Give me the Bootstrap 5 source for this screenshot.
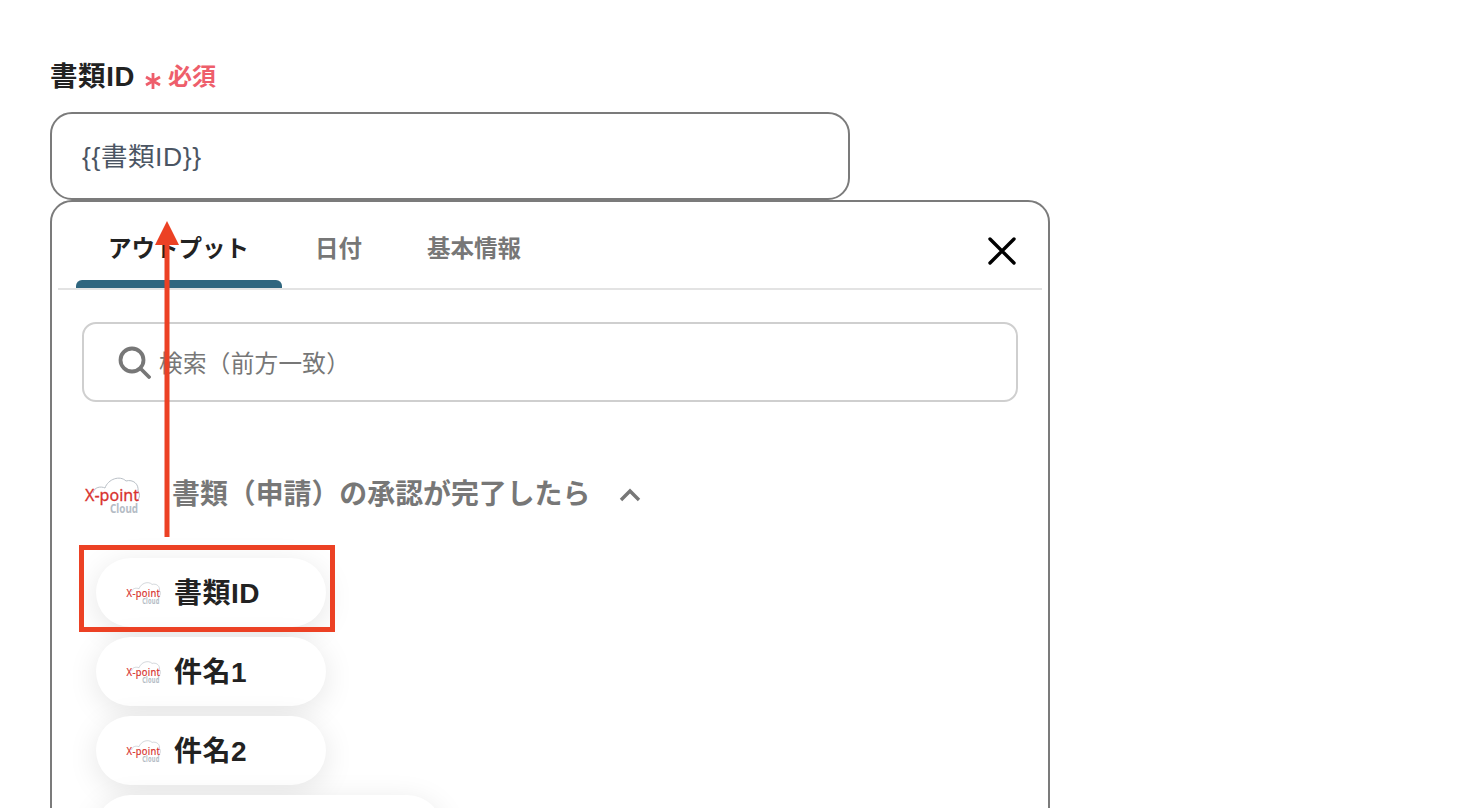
<!DOCTYPE html>
<html lang="ja">
<head>
<meta charset="utf-8">
<title>書類ID</title>
<link href="https://cdn.jsdelivr.net/npm/bootstrap@5.3.0/dist/css/bootstrap.min.css" rel="stylesheet">
<style>
html,body{height:808px;overflow:hidden;background:#fff}
body{font-family:"Liberation Sans","Noto Sans CJK JP",sans-serif;color:#222;position:relative}
.shell{padding:57px 0 0 50px;width:1050px;height:808px;overflow:hidden}
.fld-label{font-size:27.500px;font-weight:700;line-height:40px;margin:0 0 15px;color:#222;letter-spacing:.6px}
.req-mark{font-size:24px;color:#ee5e6b;margin-left:9px;font-weight:700;letter-spacing:0}
.req-star{display:inline-block;width:18px;height:18px;margin-top:7px;margin-right:6px}
.val-box{width:800px;height:88px;border:2px solid #7b7b7b;border-radius:22px;padding:0 30px;font-size:26.500px;letter-spacing:.6px;color:#4b5563;line-height:86px;background:#fff}
.panel{width:1000px;height:700px;border:2px solid #7b7b7b;border-radius:22px;padding:0 6px;background:#fff}
.tabs-row{height:88px;border-bottom:2px solid #e3e3e3;padding-left:18px;position:relative}
.tab-item{font-size:23.500px;font-weight:700;color:#777;line-height:94px;height:86px;position:relative;white-space:nowrap}
.tab-item.is-on{color:#222;width:206px;padding:0 32px}
.tab-item.is-on::after{content:"";position:absolute;left:0;right:0;bottom:0;height:8px;background:#2f667f;border-radius:6px 6px 0 0}
.tab-item + .tab-item{padding:0 0 0 33px}
.tab-item + .tab-item + .tab-item{padding-left:65px}
.x-btn{position:absolute;right:24px;top:33px;width:32px;height:32px}
.search-box{margin:32px 24px 0 24px;height:80px;border:2px solid #cfcfcf;border-radius:14px;padding-left:33px;gap:8px;font-size:23.600px;letter-spacing:.3px;color:#777;background:#fff}
.search-txt{padding-top:6px}
.grp-head{margin:68px 0 0 26px;height:50px;gap:30px}
.grp-title{font-size:27.900px;font-weight:700;color:#777;white-space:nowrap}
.logo-lg{width:58px;height:40px;flex:none;margin-top:-3px}
.chev{margin-left:-1px}
.logo-sm{width:36px;height:25px;flex:none}
.pills{margin:38px 0 0 38px;gap:10px}
.out-pill{width:230px;height:69px;border-radius:35px;background:#fff;box-shadow:0 6px 30px rgba(0,0,0,.1);padding-left:30px;gap:12px;font-size:28px;letter-spacing:.5px;line-height:1;padding-top:2px;font-weight:700;color:#222;flex:none}
.logo-sm{margin-top:-2px}
.out-pill.wide{width:346px}
.overlay{position:absolute;left:0;top:0;pointer-events:none}
.hilite{position:absolute;left:79px;top:545px;width:256px;height:87px;border:5px solid #ec4124}
</style>
</head>
<body>
<svg width="0" height="0" class="position-absolute">
  <defs>
    <symbol id="xp" viewBox="0 0 58 40">
      <path d="M9 19 C10 13 17 12 21 14 C24 5 36 1 42 7 C49 5 55 10 54 17 C57 21 55 26 52 27" fill="none" stroke="#b9bfc6" stroke-width="1"/>
      <text x="1" y="27" font-family="Noto Sans" font-size="17" font-weight="400" fill="#d8322e" textLength="54" lengthAdjust="spacingAndGlyphs" stroke="#d8322e" stroke-width=".3">X-point</text>
      <text x="26" y="39" font-family="Noto Sans" font-size="13" font-weight="700" fill="#b4bcc5" textLength="28" lengthAdjust="spacingAndGlyphs">Cloud</text>
    </symbol>
  </defs>
</svg>
<div class="shell">
  <p class="fld-label d-flex align-items-center">書類ID<span class="req-mark d-inline-flex align-items-center"><svg class="req-star" viewBox="0 0 18 18"><path d="M9 1V17M2 5L16 13M16 5L2 13" stroke="#ee5e6b" stroke-width="2.800" fill="none"/></svg>必須</span></p>
  <div class="val-box">{{書類ID}}</div>
  <div class="panel">
    <div class="tabs-row d-flex">
      <div class="tab-item is-on">アウトプット</div>
      <div class="tab-item">日付</div>
      <div class="tab-item">基本情報</div>
      <svg class="x-btn" viewBox="0 0 32 32"><path d="M4 4L28 28M28 4L4 28" stroke="#000" stroke-width="3.400" stroke-linecap="round" fill="none"/></svg>
    </div>
    <div class="search-box d-flex align-items-center">
      <svg width="34" height="34" viewBox="0 0 34 34"><circle cx="15" cy="15" r="11.500" fill="none" stroke="#777" stroke-width="3.800"/><path d="M24 24L32 32" stroke="#777" stroke-width="3.800" stroke-linecap="round"/></svg>
      <span class="search-txt">検索（前方一致）</span>
    </div>
    <div class="grp-head d-flex align-items-center">
      <svg class="logo-lg"><use href="#xp"/></svg>
      <span class="grp-title">書類（申請）の承認が完了したら</span>
      <svg class="chev" width="22" height="14" viewBox="0 0 22 14"><path d="M2 12L11 3L20 12" fill="none" stroke="#777" stroke-width="3.400"/></svg>
    </div>
    <div class="pills d-flex flex-column">
      <div class="out-pill d-flex align-items-center"><svg class="logo-sm"><use href="#xp"/></svg>書類ID</div>
      <div class="out-pill d-flex align-items-center"><svg class="logo-sm"><use href="#xp"/></svg>件名1</div>
      <div class="out-pill d-flex align-items-center"><svg class="logo-sm"><use href="#xp"/></svg>件名2</div>
      <div class="out-pill wide d-flex align-items-center"></div>
    </div>
  </div>
</div>
<div class="hilite"></div>
<svg class="overlay" width="300" height="560" viewBox="0 0 300 560"><path d="M164.500 537V245H155L167 221L179 245H169.500V537Z" fill="#ec4124"/></svg>
<script src="https://cdn.jsdelivr.net/npm/bootstrap@5.3.0/dist/js/bootstrap.bundle.min.js"></script>
</body>
</html>
